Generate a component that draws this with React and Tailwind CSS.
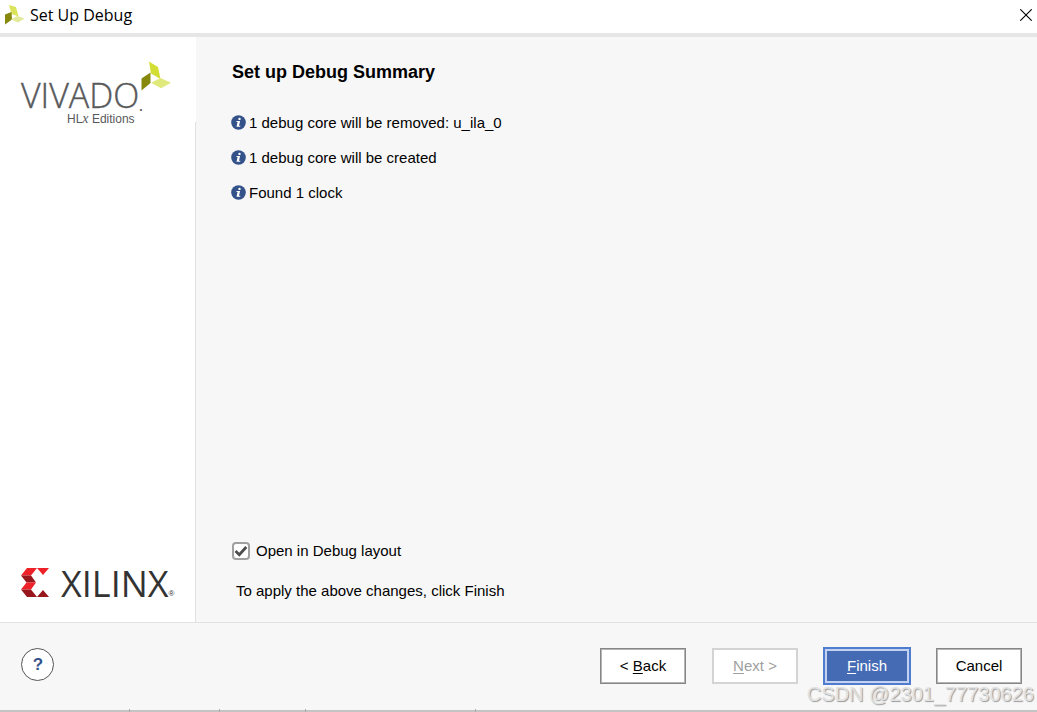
import React from "react";

function LeafMark({ className }) {
  return (
    <svg viewBox="0 0 30 30" className={className} aria-hidden="true">
      <path d="M8 0.5 L17 6 L19.5 18 L10 12.5 Z" fill="#d3de35" />
      <path d="M0.5 17.5 L9.5 11.5 L9.5 22 L0.5 29.5 Z" fill="#86890c" />
      <path d="M10 21.8 L19.5 17 L30 21.8 L20 27.2 Z" fill="#e0e97c" />
    </svg>
  );
}

function SmallLeafMark() {
  return (
    <svg viewBox="0 0 20 20" className="size-5" aria-hidden="true">
      <path d="M5 0 L12 2 L14.5 11.5 L7.5 9 Z" fill="#dbe35c" />
      <path d="M1 9.5 L7.5 7 L8 14.5 L1 19.5 Z" fill="#86890c" />
      <path d="M7 14.5 L13 11 L20.5 13.5 L14 17.5 Z" fill="#e3e99a" />
    </svg>
  );
}

function XilinxMark() {
  return (
    <svg viewBox="0 0 28 29" className="h-[29px] w-[28px]" aria-hidden="true">
      <path d="M6 0 H16 L10 7.5 H0 Z" fill="#ee2028" />
      <path d="M0 7.5 H10 L15 14.5 H5.5 Z" fill="#98171d" />
      <path d="M5.5 14.5 H15 L10 21.5 H0 Z" fill="#ee2028" />
      <path d="M0 21.5 H10 L16 29 H6 Z" fill="#98171d" />
      <path d="M16 0 H28 L22 7 Z" fill="#ee2028" />
      <path d="M16 29 H28 L22 22 Z" fill="#98171d" />
    </svg>
  );
}

function InfoIcon() {
  return (
    <svg viewBox="0 0 15 15" className="size-[15px] shrink-0" aria-hidden="true">
      <circle cx="7.5" cy="7.5" r="7.3" fill="#34528a" />
      <circle cx="8.5" cy="3.9" r="1.2" fill="#fff" />
      <path d="M5.6 6 H9.1 L8 10.7 H9.4 L9.1 11.7 H5.5 L6.6 7 H5.4 Z" fill="#fff" />
    </svg>
  );
}

const messages = [
  "1 debug core will be removed: u_ila_0",
  "1 debug core will be created",
  "Found 1 clock",
];

const plainButton =
  "h-9 w-[86px] border border-[#878787] bg-white inset-ring inset-ring-[#b4b4b4]";

export default function App() {
  return (
    <div className="relative flex min-h-screen flex-col bg-[#f7f7f7] font-['Liberation_Sans',Arial,sans-serif] text-[15px] leading-5 text-black">
      <header className="flex h-[37px] items-center justify-between border-b-4 border-[#e6e6e6] bg-white pr-[5px] pl-1">
        <div className="flex items-center gap-[6px] pb-1">
          <SmallLeafMark />
          <h1 className="font-['Open_Sans','Noto_Sans',sans-serif] text-base leading-5">Set Up Debug</h1>
        </div>
        <button type="button" aria-label="Close" className="pb-1">
          <svg viewBox="0 0 12 12" className="size-3" aria-hidden="true">
            <path d="M0.3 0.3 L11.7 11.7 M11.7 0.3 L0.3 11.7" stroke="#000" strokeWidth="1.1" />
          </svg>
        </button>
      </header>

      <div className="flex flex-1">
        <aside className="flex w-[196px] shrink-0 flex-col bg-white">
          <div className="h-[85px] pt-6 pl-[21px]">
            <div className="relative w-[150px] pt-4 text-[#58595b]">
              <div className="flex items-end">
                <span className="font-['Open_Sans',sans-serif] text-[34px] leading-9 font-light [-webkit-text-stroke:0.4px_#58595b]">VIVADO</span>
                <span className="text-xs leading-3 font-bold">.</span>
              </div>
              <div className="pl-[46px] text-xs leading-3">
                HL<i className="font-['Liberation_Serif',serif] text-sm leading-3">x</i> Editions
              </div>
              <LeafMark className="absolute top-0 right-0 size-[30px]" />
            </div>
          </div>
          <div className="flex flex-1 items-end border-r border-[#e2e2e2] pb-[22px] pl-[21px]">
            <div className="flex items-center gap-3 text-[#333]">
              <XilinxMark />
              <div className="flex items-end pt-1">
                <span className="font-['Open_Sans',sans-serif] text-4xl leading-8">XILINX</span>
                <span className="text-[8px] leading-3">®</span>
              </div>
            </div>
          </div>
        </aside>

        <main className="flex flex-1 flex-col justify-between pt-[23px] pr-6 pb-[21px] pl-9">
          <section>
            <h2 className="text-lg leading-6 font-bold">Set up Debug Summary</h2>
            <ul className="mt-[29px] flex flex-col gap-[15px]">
              {messages.map((m) => (
                <li key={m} className="-ml-px flex items-start gap-[3px]">
                  <span className="flex pt-[2px]">
                    <InfoIcon />
                  </span>
                  <span>{m}</span>
                </li>
              ))}
            </ul>
          </section>
          <section className="flex flex-col gap-5">
            <label className="flex items-center gap-[6px]">
              <span className="grid">
                <input
                  type="checkbox"
                  defaultChecked
                  className="peer col-start-1 row-start-1 size-[18px] appearance-none rounded-[4px] border-2 border-[#a0a0a0] bg-white"
                />
                <svg
                  viewBox="0 0 18 18"
                  className="pointer-events-none invisible col-start-1 row-start-1 size-[18px] peer-checked:visible"
                  aria-hidden="true"
                >
                  <path d="M3.5 9 L7.3 12.7 L14.3 5" fill="none" stroke="#4d4d4d" strokeWidth="2.8" />
                </svg>
              </span>
              Open in Debug layout
            </label>
            <p className="pl-1">To apply the above changes, click Finish</p>
          </section>
        </main>
      </div>

      <footer className="flex h-[87px] items-start justify-between border-t border-[#e2e2e2] pt-6 pr-[15px] pl-[21px]">
        <button
          type="button"
          aria-label="Help"
          className="mt-px size-[33px] rounded-full border border-[#555] bg-white pl-px text-[17px] font-bold text-[#34528a]"
        >
          ?
        </button>
        <div className="flex items-center gap-[26px]">
          <button type="button" className={plainButton}>
            &lt; <u className="underline-offset-2">B</u>ack
          </button>
          <button type="button" disabled className="h-9 w-[86px] border-2 border-[#d4d4d4] bg-white text-[#a0a0a0]">
            <u className="underline-offset-2">N</u>ext &gt;
          </button>
          <button type="button" className="-mx-px h-[38px] w-[88px] border-2 border-[#4f7ccf] bg-[#466bb5] text-white inset-ring-2 inset-ring-[#c3d2f0]">
            <u className="underline-offset-2">F</u>inish
          </button>
          <button type="button" className={plainButton}>
            Cancel
          </button>
        </div>
      </footer>
      <div className="flex h-[3px] border-[#aaa]" aria-hidden="true">
        <div className="mt-px w-[129px] bg-[#c4c4c4]" />
        <div className="w-px bg-[#aaa]" />
        <div className="mt-px w-[89px] bg-[#c4c4c4]" />
        <div className="w-px bg-[#aaa]" />
        <div className="mt-px w-[85px] bg-[#c4c4c4]" />
        <div className="w-px bg-[#aaa]" />
        <div className="mt-px w-[169px] bg-[#c4c4c4]" />
        <div className="w-px bg-[#aaa]" />
        <div className="mt-px flex-1 bg-[#c4c4c4]" />
      </div>

      <div className="pointer-events-none absolute right-[3px] bottom-[6px] text-xl leading-6 text-[#e2e2e2] [text-shadow:1px_1px_1px_#999]">
        CSDN @2301_77730626
      </div>
    </div>
  );
}
